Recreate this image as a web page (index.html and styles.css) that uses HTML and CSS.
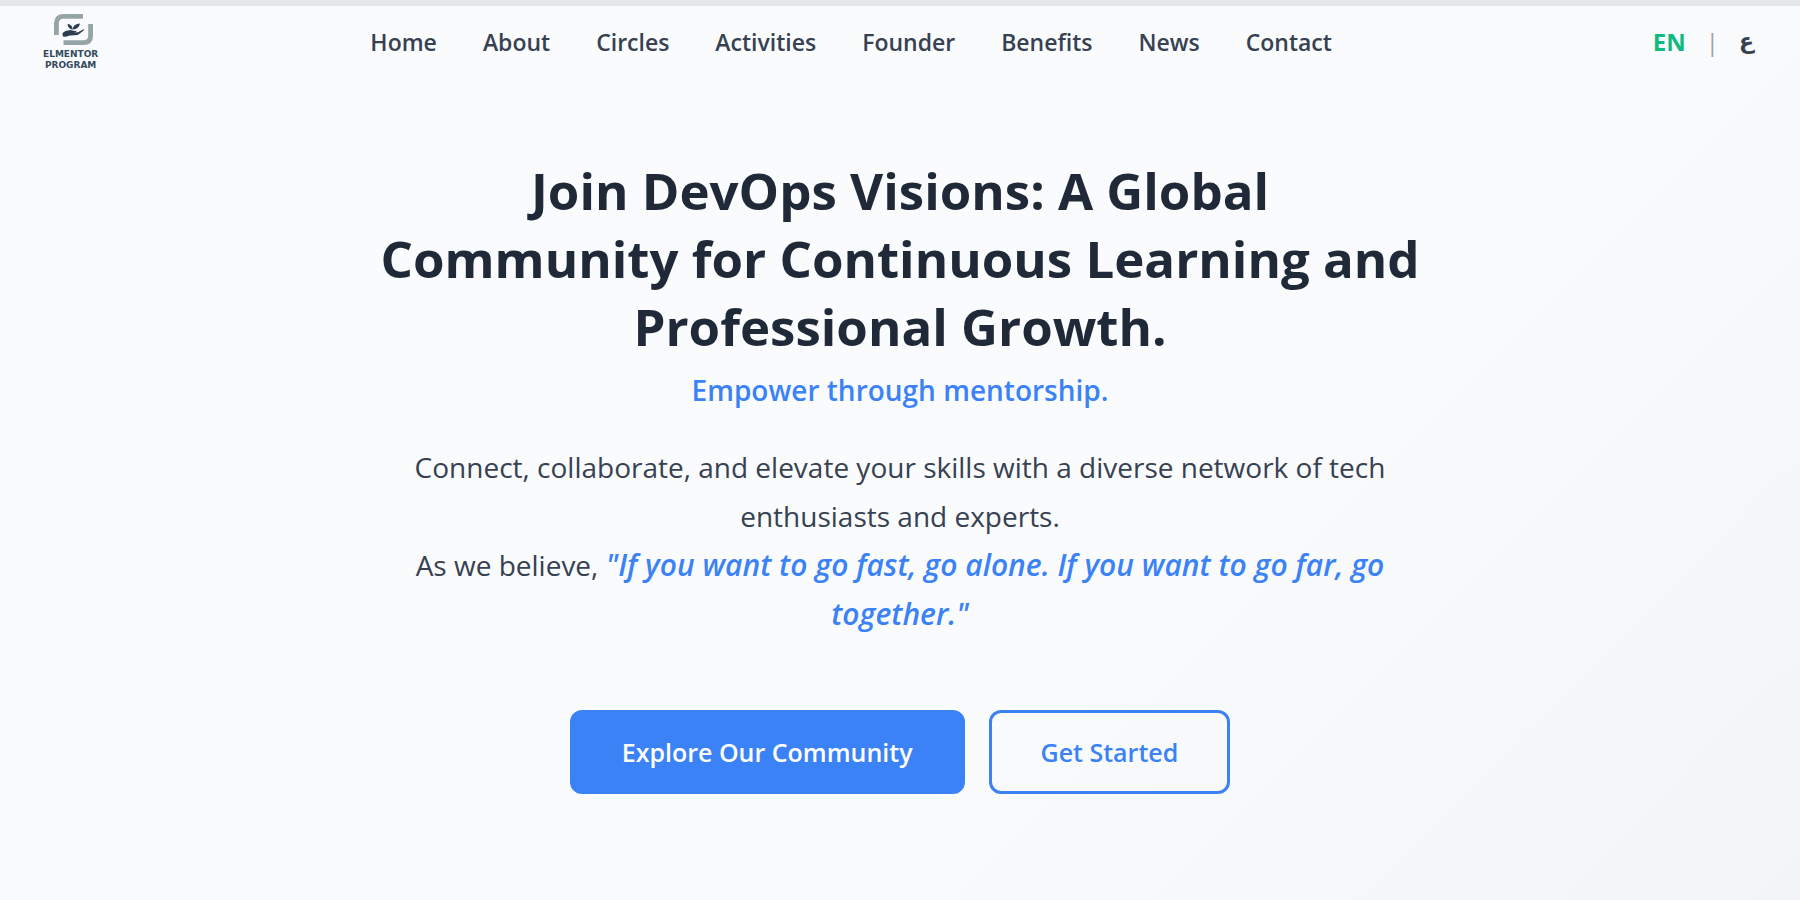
FILE: index.html
```html
<!DOCTYPE html>
<html lang="en">
<head>
<meta charset="utf-8">
<meta name="viewport" content="width=device-width, initial-scale=1">
<title>Elmentor Program</title>
<link rel="stylesheet" href="styles.css">
</head>
<body>
<header class="header">
  <a class="logo" href="#home">
    <svg class="logo-mark" viewBox="0 0 39 31" width="39" height="31" aria-hidden="true">
      <path class="logo-frame" d="M2.400 21V9.500Q2.400 2.400 9.500 2.400H29M36.600 10V21.500Q36.600 28.600 29.500 28.600H9.500"/>
      <path class="logo-hand" d="M8.500 19l3-2 5-1 3 .8 3 .2-.5 1.200-3 .5 5-.5 5.500-3 .8.800-6.500 5-8 .6-4 1.200-3-.4z"/>
      <path class="logo-hand" d="M18.800 15.500q-.5-5-5.300-5.800.3 5 5.300 5.800q.2-5.500 7.200-6-1 5.500-7.200 6z"/>
    </svg>
    <span class="logo-name">ELMENTOR<br>PROGRAM</span>
  </a>
  <nav class="nav">
    <a href="#home">Home</a>
    <a href="#about">About</a>
    <a href="#circles">Circles</a>
    <a href="#activities">Activities</a>
    <a href="#founder">Founder</a>
    <a href="#benefits">Benefits</a>
    <a href="#news">News</a>
    <a href="#contact">Contact</a>
  </nav>
  <div class="lang">
    <button class="lang-option lang-active" type="button">EN</button>
    <span class="lang-divider">|</span>
    <button class="lang-option lang-arabic" type="button" lang="ar">ع</button>
  </div>
</header>
<main class="hero">
  <h1 class="title">Join DevOps Visions: A Global Community for Continuous Learning and Professional Growth.</h1>
  <p class="tagline">Empower through mentorship.</p>
  <p class="lead">Connect, collaborate, and elevate your skills with a diverse network of tech enthusiasts and experts.<br>As we believe, <em class="quote">"If you want to go fast, go alone. If you want to go far, go together."</em></p>
  <div class="actions">
    <a class="button button-primary" href="#community">Explore Our Community</a>
    <a class="button button-outline" href="#start">Get Started</a>
  </div>
</main>
</body>
</html>
```

FILE: styles.css
```css
* { box-sizing: border-box; }

body {
  margin: 0;
  min-height: 100vh;
  border-top: 6px solid #e5e7eb;
  background: linear-gradient(135deg, #f9fbfd 0%, #f9fbfd 62%, #f3f4f6 100%);
  color: #374151;
  font-family: "Segoe UI", "Open Sans", "Noto Sans", sans-serif;
}

a { color: inherit; text-decoration: none; }

.header {
  display: grid;
  grid-template-columns: auto 1fr auto;
  align-items: center;
  min-height: 72px;
  padding: 0 46px 0 43px;
}

.logo {
  display: flex;
  flex-direction: column;
  align-items: center;
  gap: 4px;
}

.logo-mark { display: block; margin-left: 6px; }
.logo-frame { fill: none; stroke: #95a5a6; stroke-width: 4.800; }
.logo-hand { fill: #2c3e50; }

.logo-name {
  color: #34495e;
  font: bold 9px/11px "DejaVu Sans", sans-serif;
  text-align: center;
}

.nav {
  display: flex;
  flex-wrap: wrap;
  justify-content: center;
  gap: 8px 46px;
  font-size: 23px;
  font-weight: 600;
  line-height: 36px;
}

.lang {
  display: flex;
  align-items: center;
  justify-content: flex-end;
  gap: 20px;
  min-width: 150px;
  font-size: 24px;
  line-height: 36px;
}

.lang-option {
  padding: 0;
  border: 0;
  background: none;
  color: #374151;
  font: inherit;
  cursor: pointer;
}

.lang-active { color: #10b981; font-weight: 700; }
.lang-arabic { font-family: "DejaVu Sans", sans-serif; font-size: 22px; font-weight: 700; }
.lang-divider { color: #9ca3af; }

.hero {
  max-width: 1056px;
  margin: 0 auto;
  padding: 78px 0 96px;
  text-align: center;
}

.title {
  margin: 0;
  padding: 0 6px;
  color: #1f2937;
  font-size: 51px;
  font-weight: 700;
  line-height: 68px;
}

.tagline {
  margin: 9px 0 0;
  color: #3b82f6;
  font-size: 28px;
  font-weight: 600;
  line-height: 42px;
}

.lead {
  margin: 32px 0 0;
  padding: 0 24px;
  font-size: 28px;
  line-height: 49px;
}

.quote { color: #3b82f6; font-size: 30px; font-weight: 600; line-height: 1; }

.actions {
  display: flex;
  flex-wrap: wrap;
  justify-content: center;
  gap: 24px;
  margin-top: 71px;
}

.button {
  padding: 18px 49px;
  border: 3px solid #3b82f6;
  border-radius: 12px;
  color: #3b82f6;
  font-size: 25px;
  font-weight: 600;
  line-height: 42px;
}

.button-primary { background: #3b82f6; color: #fff; }
```
